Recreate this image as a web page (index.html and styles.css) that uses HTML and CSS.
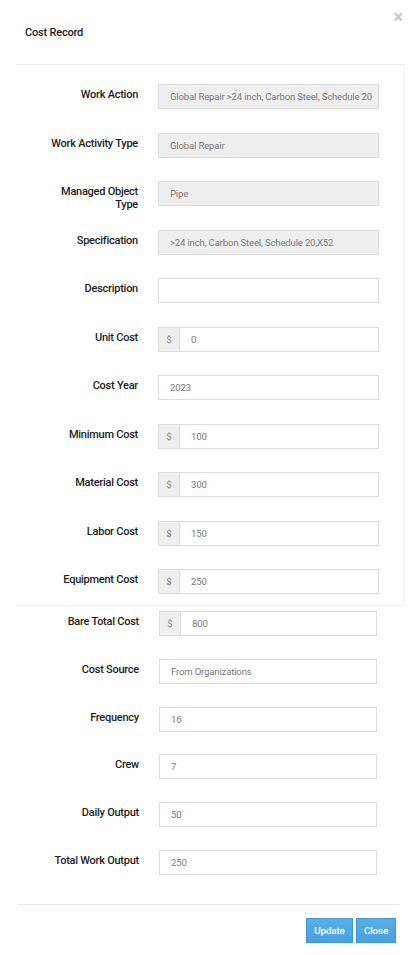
FILE: index.html
```html
<!DOCTYPE html>
<html>
<head>
<meta charset="utf-8">
<link rel="stylesheet" href="styles.css">
</head>
<body>
<div class="modal">
  <div class="modal-header">
    <h4 class="modal-title">Cost Record</h4>
    <span class="close">&times;</span>
  </div>
  <div class="panel">
    <div class="form-grid top">
      <label class="lbl">Work Action</label>
      <div class="ctrl readonly">Global Repair &gt;24 inch, Carbon Steel, Schedule 20</div>
      <label class="lbl">Work Activity Type</label>
      <div class="ctrl readonly">Global Repair</div>
      <label class="lbl">Managed Object Type</label>
      <div class="ctrl readonly">Pipe</div>
      <label class="lbl">Specification</label>
      <div class="ctrl readonly">&gt;24 inch, Carbon Steel, Schedule 20,X52</div>
      <label class="lbl">Description</label>
      <div class="ctrl"></div>
      <label class="lbl">Unit Cost</label>
      <div class="group"><span class="addon">$</span><span class="ctrl">0</span></div>
      <label class="lbl">Cost Year</label>
      <div class="ctrl">2023</div>
      <label class="lbl">Minimum Cost</label>
      <div class="group"><span class="addon">$</span><span class="ctrl">100</span></div>
      <label class="lbl">Material Cost</label>
      <div class="group"><span class="addon">$</span><span class="ctrl">300</span></div>
      <label class="lbl">Labor Cost</label>
      <div class="group"><span class="addon">$</span><span class="ctrl">150</span></div>
      <label class="lbl">Equipment Cost</label>
      <div class="group"><span class="addon">$</span><span class="ctrl">250</span></div>
    </div>
  </div>
  <div class="form-grid bottom">
    <label class="lbl">Bare Total Cost</label>
    <div class="group"><span class="addon">$</span><span class="ctrl">800</span></div>
    <label class="lbl">Cost Source</label>
    <div class="ctrl">From Organizations</div>
    <label class="lbl">Frequency</label>
    <div class="ctrl">16</div>
    <label class="lbl">Crew</label>
    <div class="ctrl">7</div>
    <label class="lbl">Daily Output</label>
    <div class="ctrl">50</div>
    <label class="lbl">Total Work Output</label>
    <div class="ctrl">250</div>
  </div>
  <div class="modal-footer">
    <button class="btn">Update</button>
    <button class="btn">Close</button>
  </div>
</div>
</body>
</html>
```

FILE: styles.css
```css
* { box-sizing: border-box; }
html, body { margin: 0; padding: 0; background: #fff; }
body {
  font-family: Roboto, "Liberation Sans", Arial, sans-serif;
  color: #222;
  width: 412px;
  height: 955px;
  overflow: hidden;
}
.modal { position: relative; }
.modal-header {
  height: 64px;
  padding: 0 0 0 25px;
  display: flex;
  align-items: center;
}
.modal-title {
  margin: 0;
  font-size: 11px;
  font-weight: 500;
  letter-spacing: -0.2px;
  color: #222;
  line-height: 14px;
  position: relative;
  top: 1px;
}
.close {
  position: absolute;
  top: 9px;
  right: 9px;
  font-size: 18px;
  font-weight: 700;
  color: #c8c8c8;
  line-height: 15px;
}
.panel {
  margin-left: 16px;
  width: 388px;
  border-top: 1px solid #ebebeb;
  border-right: 1px solid #f3f3f3;
  border-bottom: 1px solid #f0f0f0;
  padding: 19px 0 11px 0;
}
.form-grid {
  display: grid;
  column-gap: 20px;
  align-items: start;
  grid-auto-rows: 25px;
}
.form-grid.top {
  grid-template-columns: 122px 221px;
  row-gap: 23.5px;
}
.form-grid.bottom {
  margin-left: 16px;
  padding-top: 5px;
  grid-template-columns: 123px 218px;
  row-gap: 22.8px;
}
.lbl {
  font-size: 11px;
  font-weight: 500;
  letter-spacing: -0.25px;
  line-height: 12.5px;
  text-align: right;
  padding: 5px 0 0 29px;
  color: #1e1e1e;
  overflow: visible;
}
.ctrl {
  display: block;
  height: 25px;
  border: 1px solid #dcdcdc;
  background: #fff;
  font-size: 9.6px;
  letter-spacing: -0.18px;
  color: #7a7a7a;
  line-height: 23px;
  padding: 0 11px;
  white-space: nowrap;
  overflow: hidden;
}
.ctrl.readonly { background: #eeeeee; }
.group { display: flex; height: 25px; }
.group .ctrl { flex: 1; border-left: none; }
.addon {
  width: 22px;
  height: 25px;
  border: 1px solid #dcdcdc;
  background: #eeeeee;
  color: #888;
  font-size: 9.6px;
  line-height: 23px;
  text-align: center;
}
.modal-footer {
  margin: 29px 13px 0 18px;
  border-top: 1px solid #e8e8e8;
  padding-top: 13px;
  padding-right: 3px;
  display: flex;
  justify-content: flex-end;
  gap: 3px;
}
.btn {
  height: 25px;
  padding: 0;
  border: 1px solid #3f97d8;
  background: linear-gradient(#5aaee8, #4aa0e0);
  color: #fff;
  font-family: Roboto, "Liberation Sans", sans-serif;
  font-size: 9.8px;
  font-weight: 500;
  letter-spacing: -0.15px;
  border-radius: 0;
}
.btn:first-child { width: 47px; }
.btn:last-child { width: 40px; }
```
